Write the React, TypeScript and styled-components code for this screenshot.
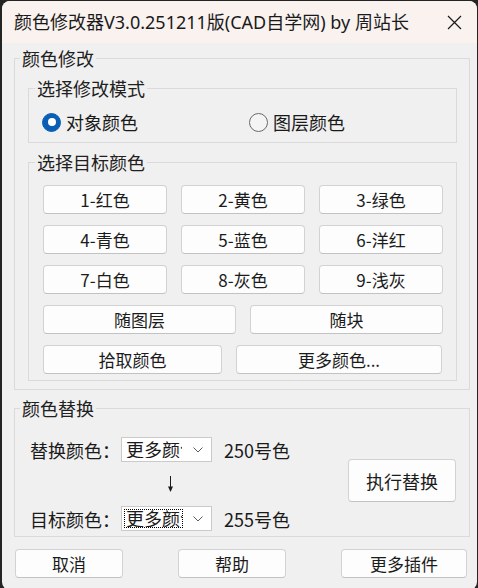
import React from "react";
import styled, { createGlobalStyle } from "styled-components";

const GlobalStyle = createGlobalStyle`
  html, body {
    margin: 0;
    padding: 0;
    background: #242424;
    overflow: hidden;
  }
  body {
    font-family: "Noto Sans CJK SC", sans-serif;
  }
  #root {
    width: 478px;
    height: 588px;
    padding-top: 1px;
    box-sizing: border-box;
  }
`;

const Window = styled.div`
  margin-left: 2px;
  width: 475px;
  height: 589px;
  background: #f0f0f0;
  border-radius: 8px;
  overflow: hidden;
  display: flex;
  flex-direction: column;
  color: #1a1a1a;
  font-size: 18px;
`;

const TitleBar = styled.div`
  height: 42px;
  flex-shrink: 0;
  background: #f9f2ef;
  display: flex;
  align-items: center;
  justify-content: space-between;
  padding-left: 12px;
`;

const TitleText = styled.div`
  font-family: "Noto Sans", "Noto Sans CJK SC", sans-serif;
  font-size: 18px;
  line-height: 20px;
  white-space: nowrap;
  color: #1a1a1a;
`;

const CloseButton = styled.div`
  width: 46px;
  height: 42px;
  display: flex;
  align-items: center;
  justify-content: center;
`;

const Body = styled.div`
  padding: 5px 7px 0 12px;
  display: flex;
  flex-direction: column;
`;

const Group = styled.fieldset<{ $gapTop?: number }>`
  margin: ${(p) => p.$gapTop ?? 0}px 0 0 0;
  padding: 0;
  border: 1px solid #dadada;
  min-width: 0;
`;

const Legend = styled.legend<{ $indent: number }>`
  margin-left: ${(p) => p.$indent}px;
  padding: 0 2px;
  font-size: 18px;
  line-height: 20px;
  color: #202020;
`;

const OuterContent = styled.div`
  padding: 10px 12px 8px 13px;
  display: flex;
  flex-direction: column;
  gap: 9px;
`;

const ModeRow = styled.div`
  padding: 14px 0 10px 13px;
  height: 20px;
  display: flex;
  align-items: center;
`;

const RadioItem = styled.label<{ $width?: number }>`
  display: flex;
  align-items: center;
  gap: 5px;
  width: ${(p) => (p.$width ? `${p.$width}px` : "auto")};
  font-size: 18px;
  line-height: 20px;
  color: #1a1a1a;
`;

const RadioCircle = styled.span<{ $checked?: boolean }>`
  width: 19px;
  height: 19px;
  box-sizing: border-box;
  border-radius: 50%;
  flex-shrink: 0;
  display: flex;
  align-items: center;
  justify-content: center;
  background: ${(p) => (p.$checked ? "#0a5fb5" : "#f4f4f4")};
  border: 1px solid ${(p) => (p.$checked ? "#0a5fb5" : "#6a6a6a")};
  &::after {
    content: "";
    display: ${(p) => (p.$checked ? "block" : "none")};
    width: 8px;
    height: 8px;
    border-radius: 50%;
    background: #ffffff;
  }
`;

const ColorContent = styled.div`
  padding: 13px 0 6px 14px;
  display: flex;
  flex-direction: column;
  gap: 11px;
`;

const ButtonRow = styled.div<{ $cols: string }>`
  display: grid;
  grid-template-columns: ${(p) => p.$cols};
  column-gap: 14px;
`;

const Button = styled.button<{ $w?: number; $h?: number; $size?: number }>`
  box-sizing: border-box;
  width: ${(p) => (p.$w ? `${p.$w}px` : "100%")};
  height: ${(p) => p.$h ?? 29}px;
  margin: 0;
  padding: 0;
  background: #fdfdfd;
  border: 1px solid #d2d2d2;
  border-bottom-color: #c2c2c2;
  border-radius: 4px;
  font-family: "Noto Sans CJK SC", sans-serif;
  font-size: ${(p) => p.$size ?? 17}px;
  line-height: 1;
  color: #1b1b1b;
  display: flex;
  align-items: center;
  justify-content: center;
  white-space: nowrap;
`;

const ReplaceContent = styled.div`
  padding: 19px 13px 5px 15px;
  display: flex;
  align-items: flex-start;
`;

const ReplaceGrid = styled.div`
  display: grid;
  grid-template-columns: 91px 91px auto;
  grid-template-rows: 25px 44px 25px;
  align-items: center;
`;

const FieldLabel = styled.div`
  grid-column: 1;
  font-size: 18px;
  line-height: 20px;
  color: #1a1a1a;
  white-space: nowrap;
`;

const ColorNumber = styled.div`
  grid-column: 3;
  margin-left: 12px;
  font-size: 18px;
  line-height: 20px;
  color: #1a1a1a;
  white-space: nowrap;
`;

const SelectBox = styled.div`
  grid-column: 2;
  box-sizing: border-box;
  width: 91px;
  height: 25px;
  background: #ffffff;
  border: 1px solid #cacaca;
  display: flex;
  align-items: center;
`;

const SelectValue = styled.div<{ $focused?: boolean }>`
  box-sizing: border-box;
  margin-left: 2px;
  width: 59px;
  height: 19px;
  padding-left: 1px;
  overflow: hidden;
  white-space: nowrap;
  font-size: 18px;
  line-height: 17px;
  color: #1a1a1a;
  border: 1px ${(p) => (p.$focused ? "dotted #000000" : "solid transparent")};
`;

const Chevron = styled.svg`
  margin-left: 10px;
  flex-shrink: 0;
`;

const ArrowCell = styled.div`
  grid-column: 2;
  justify-self: start;
  margin-left: 47px;
  display: flex;
`;

const ExecuteWrap = styled.div`
  margin-left: auto;
  margin-top: 22px;
`;

const Footer = styled.div`
  padding: 12px 0 0 1px;
  display: flex;
  gap: 55px;
`;

const colorRows: string[][] = [
  ["1-红色", "2-黄色", "3-绿色"],
  ["4-青色", "5-蓝色", "6-洋红"],
  ["7-白色", "8-灰色", "9-浅灰"],
];

function ChevronIcon() {
  return (
    <Chevron width="10" height="6" viewBox="0 0 10 6">
      <polyline points="0.5,0.5 5,5 9.5,0.5" fill="none" stroke="#5c5c5c" strokeWidth="1" />
    </Chevron>
  );
}

function Select({ value, focused }: { value: string; focused?: boolean }) {
  return (
    <SelectBox>
      <SelectValue $focused={focused}>{value}</SelectValue>
      <ChevronIcon />
    </SelectBox>
  );
}

export default function App() {
  return (
    <>
      <GlobalStyle />
      <Window>
        <TitleBar>
          <TitleText>颜色修改器V3.0.251211版(CAD自学网) by 周站长</TitleText>
          <CloseButton>
            <svg width="15" height="15" viewBox="0 0 15 15">
              <path d="M1 1 L14 14 M14 1 L1 14" stroke="#1a1a1a" strokeWidth="1.2" fill="none" />
            </svg>
          </CloseButton>
        </TitleBar>
        <Body>
          <Group>
            <Legend $indent={5}>颜色修改</Legend>
            <OuterContent>
              <Group>
                <Legend $indent={6}>选择修改模式</Legend>
                <ModeRow>
                  <RadioItem $width={207}>
                    <RadioCircle $checked />
                    对象颜色
                  </RadioItem>
                  <RadioItem>
                    <RadioCircle />
                    图层颜色
                  </RadioItem>
                </ModeRow>
              </Group>
              <Group>
                <Legend $indent={6}>选择目标颜色</Legend>
                <ColorContent>
                  {colorRows.map((row, i) => (
                    <ButtonRow key={i} $cols="repeat(3, 124px)">
                      {row.map((label) => (
                        <Button key={label}>{label}</Button>
                      ))}
                    </ButtonRow>
                  ))}
                  <ButtonRow $cols="193px 193px">
                    <Button>随图层</Button>
                    <Button>随块</Button>
                  </ButtonRow>
                  <ButtonRow $cols="179px 206px">
                    <Button>拾取颜色</Button>
                    <Button>更多颜色...</Button>
                  </ButtonRow>
                </ColorContent>
              </Group>
            </OuterContent>
          </Group>
          <Group $gapTop={8}>
            <Legend $indent={5}>颜色替换</Legend>
            <ReplaceContent>
              <ReplaceGrid>
                <FieldLabel>替换颜色：</FieldLabel>
                <Select value="更多颜色" />
                <ColorNumber>250号色</ColorNumber>
                <ArrowCell>
                  <svg width="5" height="16" viewBox="0 0 5 16">
                    <path d="M2.5 0 V12" stroke="#1a1a1a" strokeWidth="1" />
                    <path d="M0 10.5 H5 L2.5 16 Z" fill="#1a1a1a" />
                  </svg>
                </ArrowCell>
                <FieldLabel>目标颜色：</FieldLabel>
                <Select value="更多颜色" focused />
                <ColorNumber>255号色</ColorNumber>
              </ReplaceGrid>
              <ExecuteWrap>
                <Button $w={108} $h={43} $size={18}>执行替换</Button>
              </ExecuteWrap>
            </ReplaceContent>
          </Group>
          <Footer>
            <Button $w={108}>取消</Button>
            <Button $w={108}>帮助</Button>
            <Button $w={126}>更多插件</Button>
          </Footer>
        </Body>
      </Window>
    </>
  );
}
